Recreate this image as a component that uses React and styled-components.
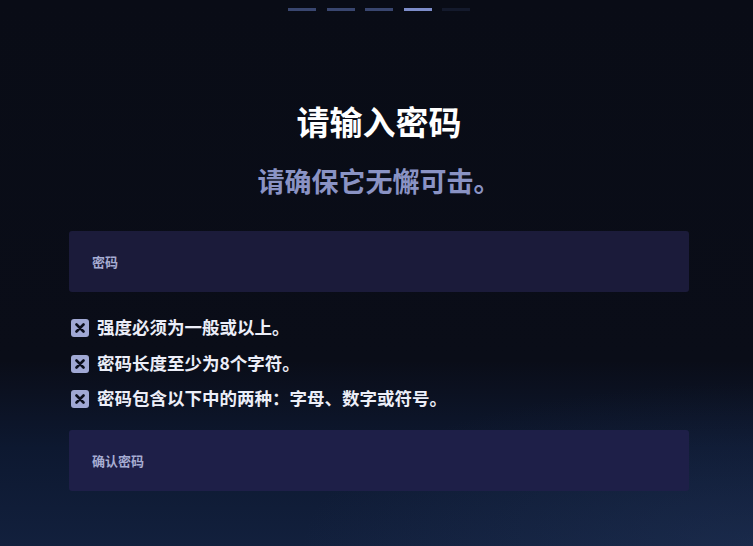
import React from "react";
import styled, { createGlobalStyle } from "styled-components";

const GlobalStyle = createGlobalStyle`
  html, body {
    margin: 0;
    padding: 0;
    background: #090c16;
  }
  body {
    font-family: "Noto Sans CJK SC", "Noto Sans", sans-serif;
  }
`;

const steps = [
  { state: "done" },
  { state: "done" },
  { state: "done" },
  { state: "current" },
  { state: "todo" },
];

const rules = [
  "强度必须为一般或以上。",
  "密码长度至少为8个字符。",
  "密码包含以下中的两种：字母、数字或符号。",
];

const stepColor = {
  done: "#39466f",
  current: "#7d8dca",
  todo: "#141a2c",
};

const Page = styled.div`
  width: 753px;
  height: 546px;
  overflow: hidden;
  box-sizing: border-box;
  padding: 0 64px 0 69px;
  display: flex;
  flex-direction: column;
  background:
    radial-gradient(ellipse 60% 30% at 100% 100%, rgba(40, 60, 100, 0.35), transparent),
    linear-gradient(
      180deg,
      #090c16 0%,
      #0a0d18 66%,
      #0d1830 82%,
      #12203d 100%
    );
`;

const Steps = styled.div`
  display: flex;
  justify-content: center;
  gap: 10.5px;
  margin-top: 8px;
`;

const Step = styled.span`
  width: 28px;
  height: 3px;
  background: ${(p) => stepColor[p.$state]};
`;

const Title = styled.h1`
  margin: 90px 0 0;
  font-size: 33px;
  line-height: 40px;
  font-weight: 700;
  color: #ffffff;
  text-align: center;
`;

const Subtitle = styled.p`
  margin: 23px 0 0;
  font-size: 27px;
  line-height: 34px;
  font-weight: 700;
  color: #8a93c4;
  text-align: center;
`;

const Field = styled.div`
  margin-top: ${(p) => p.$top}px;
  height: 61px;
  border-radius: 3px;
  background: ${(p) => p.$bg};
  display: flex;
  align-items: center;
  padding-left: 23px;
  font-size: 13px;
  font-weight: 700;
  color: #a6acd2;
`;

const RuleList = styled.ul`
  list-style: none;
  margin: 17px 0 0;
  padding: 0;
`;

const Rule = styled.li`
  display: flex;
  align-items: center;
  gap: 8px;
  height: 35.5px;
  padding-left: 2px;
  font-size: 17.5px;
  font-weight: 700;
  color: #eceef8;
`;

const CheckBox = styled.span`
  width: 18px;
  height: 18px;
  border-radius: 3px;
  background: #a0a8d4;
  display: flex;
  align-items: center;
  justify-content: center;
  flex-shrink: 0;
  margin-top: 3px;
`;

const CrossIcon = () => (
  <svg width="10" height="10" viewBox="0 0 10 10">
    <path
      d="M1.5 1.5 L8.5 8.5 M8.5 1.5 L1.5 8.5"
      stroke="#0b0e1c"
      strokeWidth="2.6"
      strokeLinecap="round"
    />
  </svg>
);

export default function App() {
  return (
    <>
      <GlobalStyle />
      <Page>
        <Steps>
          {steps.map((s, i) => (
            <Step key={i} $state={s.state} />
          ))}
        </Steps>
        <Title>请输入密码</Title>
        <Subtitle>请确保它无懈可击。</Subtitle>
        <Field $top={33} $bg="#1b1b3a">
          密码
        </Field>
        <RuleList>
          {rules.map((r) => (
            <Rule key={r}>
              <CheckBox>
                <CrossIcon />
              </CheckBox>
              {r}
            </Rule>
          ))}
        </RuleList>
        <Field $top={14} $bg="#1e1f48">
          确认密码
        </Field>
      </Page>
    </>
  );
}
